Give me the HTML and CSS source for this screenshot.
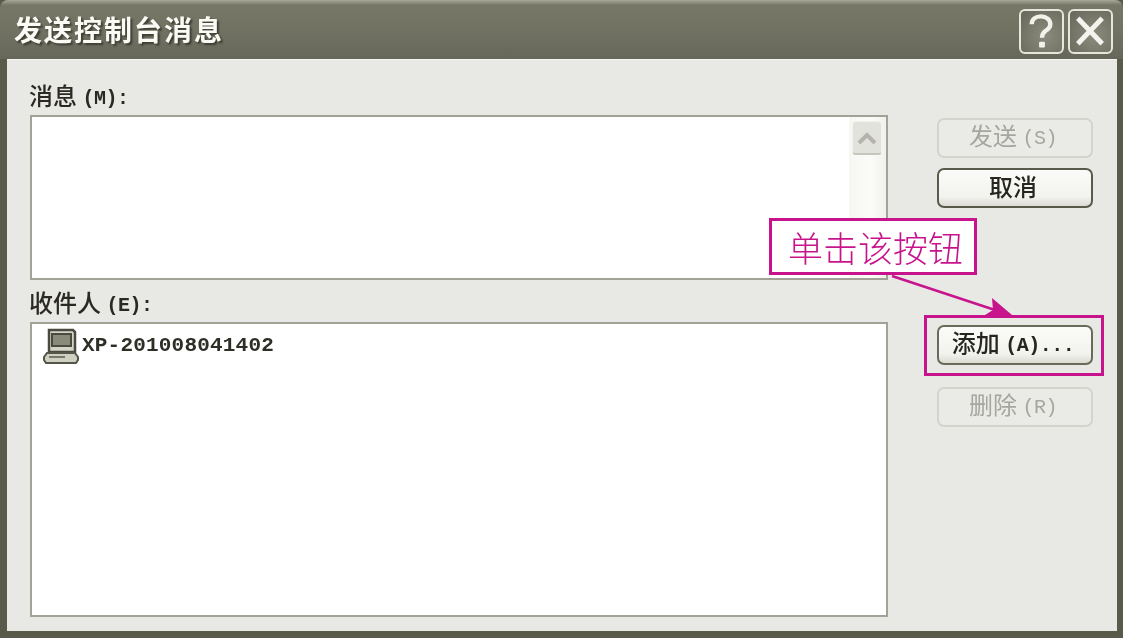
FILE: index.html
```html
<!DOCTYPE html>
<html lang="zh">
<head>
<meta charset="utf-8">
<title>发送控制台消息</title>
<link rel="stylesheet" href="styles.css">
</head>
<body>
<div class="window">
  <header class="titlebar">
    <h1 class="title">发送控制台消息</h1>
    <div class="caption-buttons">
      <div class="caption-btn">
        <svg viewBox="0 0 42 42" width="42" height="42"><path d="M11 14c0-5 4-8 9.500-8S30 9.500 30 14c0 3.500-2 5-5 7-2.500 1.800-3.500 3-3.500 7" fill="none" stroke="#f2f2ea" stroke-width="4.500"/><rect x="18.500" y="32" width="6" height="6" rx="1" fill="#f2f2ea"/></svg>
      </div>
      <div class="caption-btn">
        <svg viewBox="0 0 42 42" width="42" height="42"><path d="M8 8l25 26M33 8L8 34" fill="none" stroke="#f4f4ee" stroke-width="5"/></svg>
      </div>
    </div>
  </header>
  <main class="client">
    <div class="fields">
      <section class="field field-message">
        <label class="label">消息 <span class="latin">(M):</span></label>
        <div class="box box-message">
          <div class="scrollbar">
            <div class="scroll-up">
              <svg viewBox="0 0 24 16" width="24" height="16"><path d="M4 13l8-8 8 8" fill="none" stroke="#b4b4ac" stroke-width="4"/></svg>
            </div>
          </div>
        </div>
      </section>
      <section class="field field-recipients">
        <label class="label">收件人 <span class="latin">(E):</span></label>
        <div class="box box-recipients">
          <div class="recipient">
            <svg class="pc-icon" viewBox="0 0 36 36" width="36" height="36">
              <path d="M6 2h24l2 2v20H6z" fill="#d4d4c8" stroke="#4a4a40" stroke-width="2.500"/>
              <rect x="9" y="6" width="19" height="12" fill="#8a8a7a" stroke="#4a4a40" stroke-width="2"/>
              <path d="M4 25h28l3 4v3l-2 3H3l-2-3v-3z" fill="#cfcfc2" stroke="#55554a" stroke-width="2"/>
              <path d="M6 29h16" stroke="#77776a" stroke-width="2"/>
            </svg>
            <span class="recipient-name">XP-201008041402</span>
          </div>
        </div>
      </section>
    </div>
    <aside class="actions">
      <button class="btn" disabled>发送 <span class="latin">(S)</span></button>
      <button class="btn">取消</button>
      <div class="actions-gap"></div>
      <button class="btn btn-add">添加 <span class="latin">(A)...</span></button>
      <button class="btn" disabled>删除 <span class="latin">(R)</span></button>
    </aside>
    <div class="highlight"></div>
    <div class="callout">单击该按钮</div>
    <svg class="arrow" viewBox="0 0 130 50" width="130" height="50">
      <path d="M2 2L108 37" stroke="#c8148c" stroke-width="2.500" fill="none"/>
      <path d="M122 41L95 41l8-5-1-12z" fill="#c8148c"/>
    </svg>
  </main>
</div>
</body>
</html>
```

FILE: styles.css
```css
* { box-sizing: border-box; }

html, body {
  margin: 0;
  width: 1123px;
  height: 638px;
  overflow: hidden;
  background: #5a5a4a;
}

body {
  font-family: "Noto Sans CJK SC", "Liberation Sans", sans-serif;
  color: #26261f;
}

.window {
  width: 1123px;
  height: 638px;
  display: flex;
  flex-direction: column;
  padding: 0 6px 7px 7px;
  background: #5a5a4a;
  filter: blur(0.4px);
}

.titlebar {
  height: 59px;
  margin: 0 -6px 0 -7px;
  padding: 0 10px 0 14px;
  display: flex;
  align-items: center;
  justify-content: space-between;
  background: linear-gradient(#a9a99b 0, #777768 5px, #727263 30px, #66665a 59px);
  border-radius: 8px 8px 0 0;
}

.title {
  margin: 0 0 2px;
  font-size: 28px;
  font-weight: 700;
  letter-spacing: 2px;
  line-height: 36px;
  color: #fbfbf6;
  text-shadow: 2px 2px 2px #3d3d32;
}

.caption-buttons {
  display: flex;
  gap: 4px;
  margin-top: 3px;
}

.caption-btn {
  width: 45px;
  height: 45px;
  display: flex;
  align-items: center;
  justify-content: center;
  border: 2px solid #e6e6da;
  border-radius: 6px;
  background: radial-gradient(circle at 60% 60%, #8b8b7d, #66665a);
}

.client {
  position: relative;
  flex: 1;
  display: flex;
  padding: 22px 24px 14px 23px;
  background: #e8e8e5;
  border-top: 1px solid #f4f4f0;
}

.fields {
  width: 858px;
  display: flex;
  flex-direction: column;
}

.field {
  display: flex;
  flex-direction: column;
}

.field-recipients {
  flex: 1;
}

.label {
  height: 33px;
  margin-left: -1px;
  font-size: 24px;
  line-height: 25px;
  font-weight: 500;
  color: #2a2a22;
}

.latin {
  font-family: "Liberation Mono", monospace;
  font-size: 20px;
  font-weight: 700;
  letter-spacing: -0.500px;
  vertical-align: 1px;
}

.box {
  background: #fff;
  border: 2px solid #a2a296;
}

.box-message {
  height: 165px;
  display: flex;
  justify-content: flex-end;
  margin-bottom: 9px;
}

.scrollbar {
  width: 37px;
  padding: 4px 3px;
  background: linear-gradient(90deg, #f6f6f2, #fbfbf8 60%, #f1f1ec);
}

.scroll-up {
  width: 30px;
  height: 34px;
  display: flex;
  align-items: center;
  justify-content: center;
  background: #e2e2dc;
  border: 1px solid #f2f2ee;
  border-bottom: 2px solid #c6c6bc;
  border-radius: 4px;
}

.box-recipients {
  flex: 1;
  padding: 4px 11px;
}

.recipient {
  display: flex;
  align-items: center;
  gap: 3px;
}

.recipient-name {
  font-family: "Liberation Mono", monospace;
  font-size: 21px;
  font-weight: 700;
  letter-spacing: 0.200px;
  line-height: 30px;
  color: #2e2e26;
}

.actions {
  width: 156px;
  margin-left: 49px;
  padding-top: 36px;
  display: flex;
  flex-direction: column;
  gap: 10px;
}

.actions-gap {
  height: 97px;
}

.btn {
  height: 40px;
  padding: 0 4px 5px 0;
  font-family: inherit;
  font-size: 24px;
  line-height: 1;
  font-weight: 500;
  color: #26261f;
  background: linear-gradient(#fbfbf9, #f2f2ee 75%, #dcdcd4);
  border: 2px solid #5a5a4a;
  border-radius: 7px;
}

.btn:disabled {
  color: #a6a6a0;
  font-weight: 400;
  background: #eaeae7;
  border-color: #d4d4ce;
}

.btn:disabled .latin {
  font-weight: 400;
}

.btn-add {
  margin-bottom: 12px;
  border-color: #6a6a5a;
  text-align: center;
}

.highlight {
  position: absolute;
  left: 917px;
  top: 255px;
  width: 180px;
  height: 61px;
  border: 3px solid #c8148c;
}

.callout {
  position: absolute;
  left: 762px;
  top: 158px;
  width: 208px;
  height: 57px;
  padding-left: 5px;
  display: flex;
  align-items: center;
  justify-content: center;
  font-size: 35px;
  font-weight: 300;
  color: #c8148c;
  background: #fff;
  border: 3px solid #c8148c;
}

.arrow {
  position: absolute;
  left: 883px;
  top: 214px;
}
```
